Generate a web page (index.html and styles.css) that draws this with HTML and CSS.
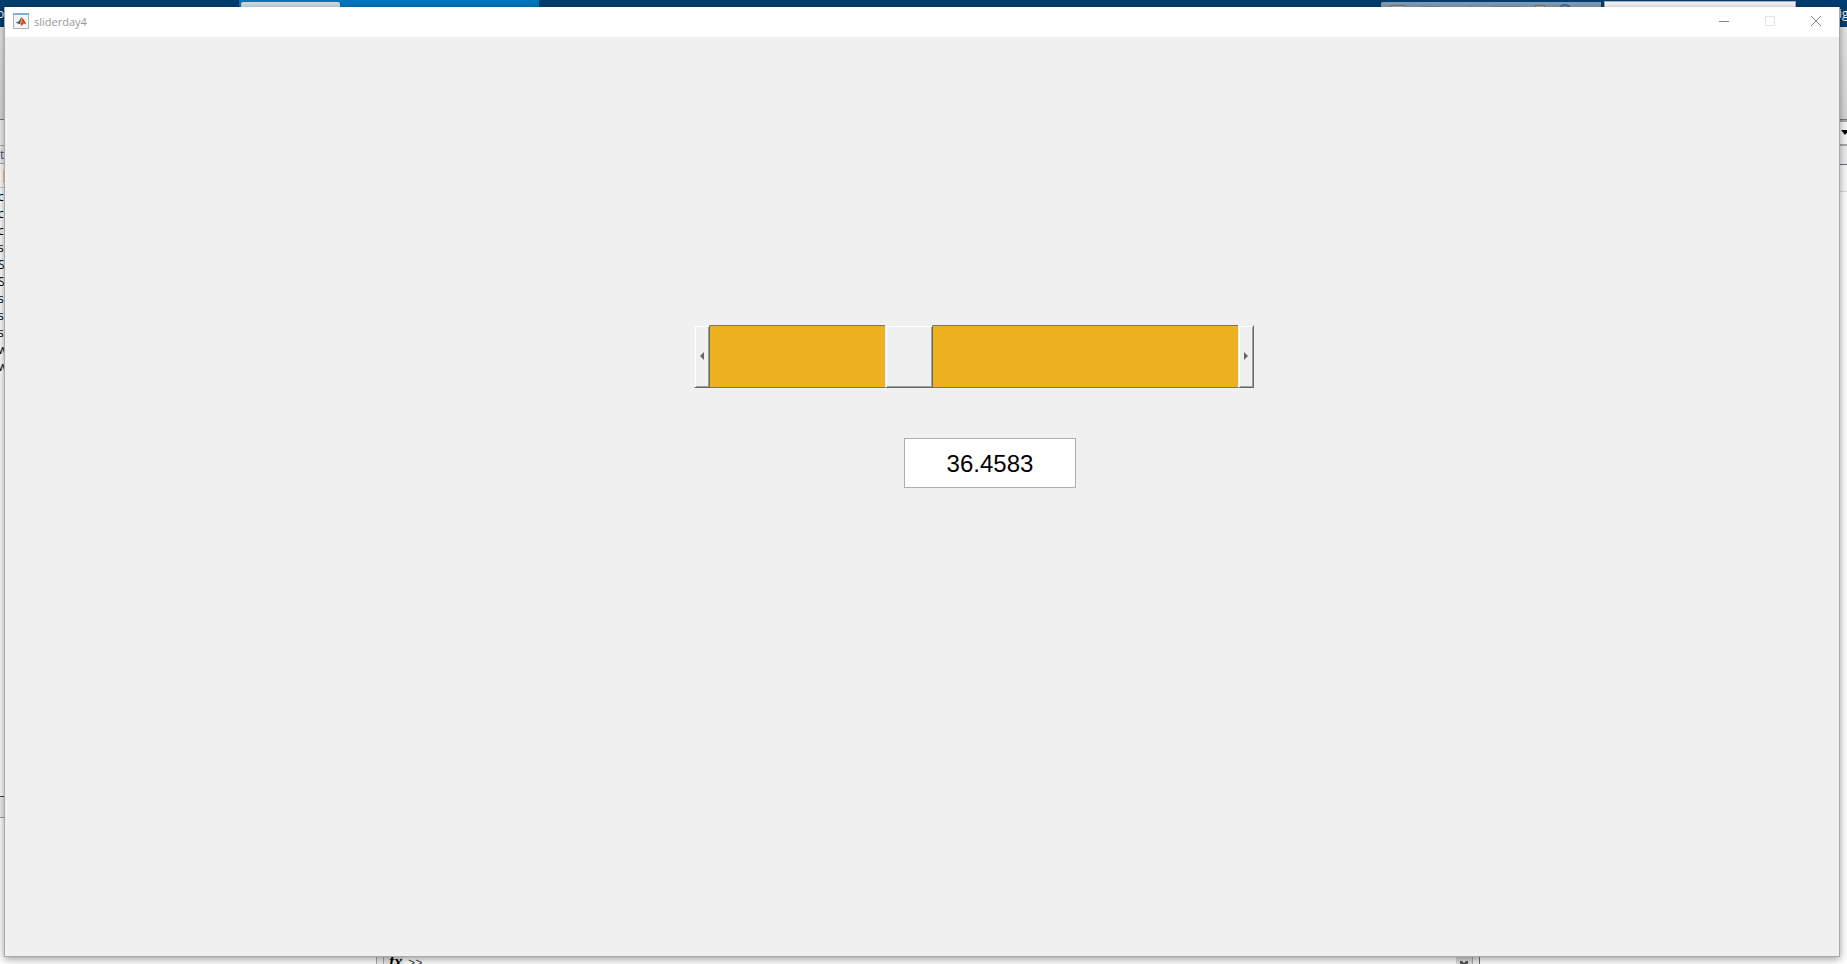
FILE: index.html
```html
<!DOCTYPE html>
<html lang="en">
<head>
<meta charset="utf-8">
<title>sliderday4</title>
<link rel="stylesheet" href="styles.css">
</head>
<body>
<div class="desktop">
  <div class="ide">
    <header class="ide-tabs">
      <span class="ide-home">o</span>
      <div class="tab-group"><span class="tab"></span></div>
      <div class="tab-space"></div>
      <div class="quick-bar">
        <svg class="quick-icons" viewBox="0 0 220 5" aria-hidden="true">
          <path d="M9.500 5V3.500h14V5M154.500 5V3.500h9V5" fill="#a9b1bb" stroke="#85716c"/>
          <path d="M179 5q5-4 10 0" fill="none" stroke="#39759f" stroke-width="2"/>
          <path d="M40 4.500h18M88 4.500h4M110 4.500h30" stroke="#7392a8"/>
        </svg>
      </div>
      <div class="search-box"></div>
      <span class="ide-login">ig</span>
    </header>
    <div class="ide-ribbon"></div>
    <div class="ide-body">
      <aside class="files">
        <div class="address"></div>
        <div class="files-title">t</div>
        <div class="files-head">|</div>
        <ul class="file-list">
          <li>c</li><li>c</li><li>c</li><li>si</li><li>S</li><li>S</li>
          <li>sl</li><li>sl</li><li>sl</li><li>w</li><li>w</li>
        </ul>
        <div class="details-bar"></div>
        <div class="details"></div>
      </aside>
      <div class="splitter"></div>
      <main class="command">
        <div class="prompt"><span class="fx">fx</span><span class="chevrons">&gt;&gt;</span><span class="scroll"><svg class="scroll-arrow" viewBox="0 0 8 8" aria-hidden="true"><path d="M0 0h2l2 2 2-2h2v3L4 7 0 3z" fill="#555"/></svg></span></div>
      </main>
      <div class="splitter splitter-dark"></div>
      <aside class="workspace">
        <div class="path-row"><svg class="drop-arrow" viewBox="0 0 8 5" aria-hidden="true"><path d="M0 0h8L4 5z"/></svg></div>
        <div class="workspace-title"></div>
        <div class="workspace-head"></div>
      </aside>
    </div>
  </div>

  <section class="window" aria-label="sliderday4">
    <div class="titlebar">
      <svg class="logo" viewBox="0 0 16 16" aria-hidden="true">
        <path d="M.5.500h15v15H.5z" fill="#f4f6f8" stroke="#a9b3bc"/>
        <path d="M0 0h16v2H0z" fill="#7fb0d3"/>
        <path d="M2.500 9.500L6 8l1 1.500L5.500 11z" fill="#4a86b8"/>
        <path d="M6 8l2.500-4L9 8l-2 3-1.500 0z" fill="#34557d"/>
        <path d="M8.500 4l2 2.500 3 5-2.500-1L8.500 13 7 10.500z" fill="#e0561f"/>
        <path d="M8.500 5L9 8l-1.500 3.500L7 10z" fill="#f2a03c"/>
        <path d="M9.500 5l3.500 6-2-1.500z" fill="#a03018"/>
      </svg>
      <span class="title">sliderday4</span>
      <div class="controls">
        <button type="button" class="control" aria-label="Minimize"><svg class="glyph" viewBox="0 0 12 12"><path d="M1 6.500h10" stroke="#888"/></svg></button>
        <button type="button" class="control" aria-label="Maximize" disabled><svg class="glyph" viewBox="0 0 12 12"><path d="M1.500 1.500h9v9h-9z" fill="none" stroke="#e4e4e4"/></svg></button>
        <button type="button" class="control" aria-label="Close"><svg class="glyph" viewBox="0 0 12 12"><path d="M1 1l10 10M11 1L1 11" stroke="#888"/></svg></button>
      </div>
    </div>
    <div class="figure">
      <div class="scrollbar">
        <button type="button" class="step" aria-label="Decrease"><svg class="arrow" viewBox="0 0 4 8"><path d="M4 0v8L0 4z" fill="#666"/></svg></button>
        <input class="range" type="range" min="0" max="100" step="any" value="36.4583" aria-label="Value">
        <button type="button" class="step" aria-label="Increase"><svg class="arrow" viewBox="0 0 4 8"><path d="M0 0v8l4-4z" fill="#666"/></svg></button>
      </div>
      <input class="readout" type="text" value="36.4583" aria-label="Slider value">
    </div>
  </section>
</div>
</body>
</html>
```
FILE: styles.css
```css
* { box-sizing: border-box; }

body {
  margin: 0;
  font-family: "Open Sans", "Noto Sans", sans-serif;
  font-size: 12px;
}

.desktop {
  position: relative;
  height: 100vh;
  overflow: hidden;
}

/* Application behind the figure window */
.ide {
  display: flex;
  flex-direction: column;
  height: 100%;
  background: #fff;
}

.ide-tabs {
  display: flex;
  flex: 0 0 27px;
  align-items: flex-start;
  background: #003e6f;
  color: #fff;
}

.ide-home { width: 239px; line-height: 27px; text-indent: -3px; }

.tab-group {
  width: 300px;
  height: 27px;
  padding: 2px;
  background: #0076be;
}

.tab {
  display: block;
  width: 99px;
  height: 25px;
  border-radius: 2px 2px 0 0;
  background: #d8d8d8;
}

.tab-space { flex: 1; }

.quick-bar {
  width: 220px;
  height: 20px;
  margin: 2px 3px 0 0;
  background: #809eb6;
  border-top-left-radius: 2px;
}

.quick-icons { display: block; width: 220px; height: 5px; }

.search-box {
  width: 192px;
  height: 20px;
  margin: 1px 43px 0 0;
  border: 1px solid #a5adb8;
  background: #f5f5f7;
}

.ide-login { width: 8px; line-height: 27px; }

.ide-ribbon {
  flex: 0 0 93px;
  background: linear-gradient(#e6e6e6, #d6d6d6);
  border-bottom: 1px solid #777;
}

.ide-body { display: flex; flex: 1; min-height: 0; }

.files {
  display: flex;
  flex-direction: column;
  width: 376px;
}

.address { height: 26px; background: #f0f0f0; border-bottom: 1px solid #aaa; }
.files-title { height: 18px; line-height: 18px; background: #f0f0f0; border-bottom: 1px solid #aaa; color: #3f5570; }
.files-head { height: 24px; line-height: 24px; padding-left: 1px; border-bottom: 1px solid #ccc; }

.file-list {
  flex: 1;
  margin: 0;
  padding: 0;
  list-style: none;
  line-height: 17px;
  text-indent: -2px;
}

.details-bar { height: 22px; background: #f0f0f0; border-top: 1px solid #444; border-bottom: 1px solid #999; }
.details { height: 146px; }

.splitter {
  width: 8px;
  background: #eee;
  border-left: 1px solid #aaa;
  border-right: 1px solid #aaa;
}

.splitter-dark { border-right: 1px solid #667080; }

.command {
  display: flex;
  flex: 1;
  flex-direction: column;
  justify-content: flex-end;
}

.prompt { display: flex; height: 8px; }

.fx {
  width: 19px;
  padding-left: 5px;
  background: #e8e8e8;
  font: italic bold 16px/12px "Liberation Serif", serif;
}

.chevrons { padding-left: 5px; font: 12px/16px "Liberation Mono", monospace; color: #444; }
.scroll { width: 16px; margin-left: auto; background: #ddd; }
.scroll-arrow { display: block; width: 8px; height: 8px; margin: 5px auto 0; }

.workspace { width: 367px; }

.path-row {
  display: flex;
  align-items: center;
  justify-content: flex-end;
  height: 26px;
  padding-bottom: 2px;
  border: solid #aaa;
  border-width: 2px 0;
  background: #f7f7f7;
}

.drop-arrow { width: 8px; height: 5px; margin-right: -2px; }
.workspace-title { height: 19px; background: #eee; border-bottom: 1px solid #667080; }
.workspace-head { height: 27px; background: #fafafa; border-bottom: 1px solid #ddd; }

/* Figure window */
.window {
  position: absolute;
  inset: 7px 7px 7px 4px;
  display: flex;
  flex-direction: column;
  border: solid #a9a9a9;
  border-width: 0 1px 1px;
  background: #f0f0f0;
  box-shadow: 0 2px 8px rgba(0, 0, 0, .4);
}

.titlebar {
  display: flex;
  align-items: center;
  height: 30px;
  padding: 0 0 2px 8px;
  background: #fff;
  color: #999;
}

.logo { width: 16px; height: 16px; }
.title { margin-left: 5px; font-size: 11px; }
.controls { display: flex; height: 100%; margin-left: auto; }

.control {
  display: grid;
  place-items: center;
  width: 46px;
  padding: 0;
  border: 0;
  background: none;
}

.glyph { width: 12px; height: 12px; }

.figure { flex: 1; padding-top: 288px; }

.scrollbar {
  display: flex;
  width: 560px;
  height: 63px;
  margin-left: calc(50% - 228px);
}

.step {
  display: grid;
  place-items: center;
  width: 16px;
  padding: 0 0 2px;
  border: 1px solid;
  border-color: #f0f0f0 #696969 #696969 #f0f0f0;
  border-radius: 0;
  background: #f0f0f0;
  box-shadow: inset 1px 1px #fff, inset -1px -1px #a0a0a0;
}

.arrow { width: 4px; height: 8px; }

.range {
  flex: 1;
  min-width: 0;
  height: 63px;
  margin: 0;
  appearance: none;
  background: #edb120;
  box-shadow: inset 0 1px #80765f, inset 0 -1px #80765f;
}

.range::-webkit-slider-thumb {
  appearance: none;
  width: 48px;
  height: 63px;
  border: 1px solid;
  border-color: #f0f0f0 #696969 #696969 #f0f0f0;
  border-radius: 0;
  background: #f0f0f0;
  box-shadow: inset 1px 1px #fff, inset -1px -1px #a0a0a0;
}

.readout {
  display: block;
  width: 172px;
  height: 50px;
  margin: 50px 0 0 calc(50% - 18px);
  padding: 2px 0 0;
  border: 1px solid #abadb3;
  background: #fff;
  color: #000;
  font: 24px "Liberation Sans", Arial, sans-serif;
  text-align: center;
}
```
